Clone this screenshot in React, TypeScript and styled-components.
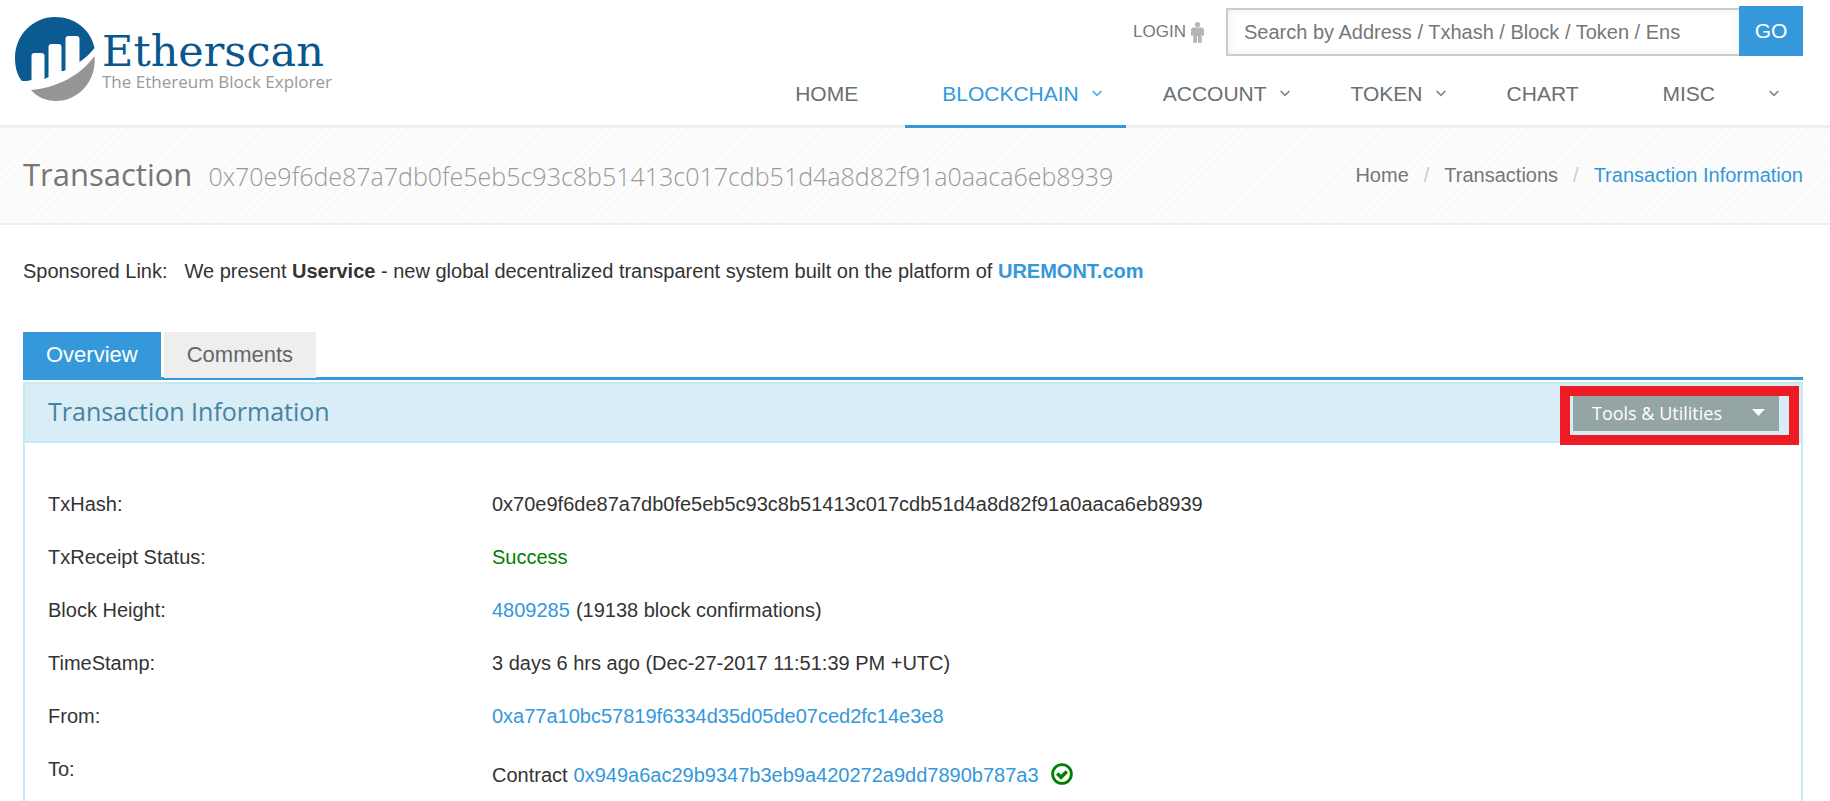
import React from "react";
import styled, { createGlobalStyle, css } from "styled-components";

const sans = `"Liberation Sans", Arial, sans-serif`;
const display = `"Open Sans", "Noto Sans", sans-serif`;

const GlobalStyle = createGlobalStyle`
  *, *::before, *::after { box-sizing: border-box; }
  body { margin: 0; background: #fff; color: #333; font: 20px/30px ${sans}; }
  a { color: #3498db; text-decoration: none; }
  h1, h2, p, dl, dd, dt, ul, ol { margin: 0; padding: 0; font-weight: 400; }
  ul, ol { list-style: none; }
`;

const Page = styled.div`
  display: flex;
  flex-direction: column;
  height: 100vh;
  overflow: hidden;
`;

const Header = styled.header`
  display: flex;
  flex: none;
  justify-content: space-between;
  height: 128px;
  padding: 0 27px 0 15px;
  border-bottom: 3px solid #eee;
`;

const Brand = styled.a`
  display: flex;
  gap: 7px;
  padding-top: 17px;
`;

const LogoMark = styled.svg`
  display: block;
  width: 80px;
  height: 84px;
`;

const BrandText = styled.span`
  display: flex;
  flex-direction: column;
  padding-top: 13px;
`;

const BrandName = styled.span`
  color: #08578f;
  font: 43px/42px "DejaVu Serif", serif;
`;

const Tagline = styled.span`
  color: #999;
  font: 17px/20px ${display};
`;

const HeaderRight = styled.div`
  display: flex;
  flex-direction: column;
  align-items: flex-end;
  justify-content: space-between;
`;

const TopRow = styled.div`
  display: flex;
  align-items: flex-start;
  gap: 22px;
  padding-top: 6px;
`;

const Login = styled.a`
  display: flex;
  align-items: center;
  gap: 5px;
  height: 52px;
  color: #777;
  font-size: 17px;
`;

const PersonIcon = styled.svg`
  width: 13px;
  height: 21px;
  fill: #b5b5b5;
`;

const Search = styled.form`
  display: flex;
  align-items: flex-end;
`;

const SearchInput = styled.input`
  width: 513px;
  height: 48px;
  padding: 0 16px;
  border: 2px solid #ccc;
  border-right: 0;
  border-radius: 0;
  background: #fff;
  box-shadow: inset 0 0 10px #eee;
  font: 20px/30px ${sans};
  &::placeholder { color: #777; opacity: 1; }
`;

const GoButton = styled.button`
  width: 64px;
  height: 50px;
  padding: 0;
  border: 0;
  background: #3498db;
  color: #fff;
  font: 21px/30px ${sans};
`;

const NavList = styled.ul`
  display: flex;
  margin-bottom: -3px;
`;

const NavLink = styled.a<{ $active?: boolean; $menu?: boolean; $wide?: boolean }>`
  display: flex;
  align-items: center;
  gap: ${(p) => (p.$wide ? 54 : 13)}px;
  height: 66px;
  padding: 0 ${(p) => (p.$menu ? 24 : 47)}px 0 37px;
  border-bottom: 3px solid ${(p) => (p.$active ? "#3498db" : "transparent")};
  color: ${(p) => (p.$active ? "#3498db" : "#687074")};
  font-size: 21px;
  line-height: 30px;
`;

const ChevronSvg = styled.svg`
  width: 10px;
  height: 7px;
  fill: none;
  stroke: currentColor;
  stroke-width: 1.6;
  opacity: 0.85;
`;

const TitleBand = styled.section`
  display: flex;
  flex: none;
  align-items: center;
  justify-content: space-between;
  height: 97px;
  padding: 0 27px 2px 23px;
  border-bottom: 2px solid #eee;
  background: repeating-linear-gradient(-45deg, #fdfdfd 0 3px, #fafafa 3px 6px);
`;

const PageTitle = styled.h1`
  color: #777;
  font: 31px/40px ${display};
`;

const TitleHash = styled.small`
  margin-left: 16px;
  color: #999;
  font-size: 25px;
  font-weight: 300;
`;

const Crumbs = styled.ol`
  display: flex;
`;

const Crumb = styled.li`
  & + &::before {
    content: "/";
    padding: 0 15px;
    color: #ccc;
  }
`;

const CrumbLink = styled.a<{ $current?: boolean }>`
  color: ${(p) => (p.$current ? "#3498db" : "#777")};
`;

const Sponsor = styled.p`
  flex: none;
  padding: 31px 23px 46px;
`;

const SponsorText = styled.span`
  margin-left: 17px;
`;

const Tabs = styled.div`
  display: flex;
  flex: none;
  align-items: flex-start;
  gap: 3px;
  height: 48px;
  margin: 0 27px 0 23px;
  border-bottom: 3px solid #3498db;
`;

const Tab = styled.button<{ $active?: boolean }>`
  height: 46px;
  padding: 0 23px;
  border: 0;
  background: #eee;
  color: #666;
  font: 22px/30px ${sans};
  ${(p) =>
    p.$active &&
    css`
      background: #3498db;
      color: #fff;
    `}
`;

const Panel = styled.section`
  flex: 1;
  margin: 2px 27px 0 23px;
  border: 2px solid #c5eaf2;
  border-bottom: 0;
`;

const PanelHeader = styled.div`
  display: flex;
  align-items: center;
  justify-content: space-between;
  height: 59px;
  padding: 0 22px 0 23px;
  border-bottom: 2px solid #c5eaf2;
  background: #d9edf7;
`;

const PanelTitle = styled.h2`
  padding-bottom: 3px;
  color: #4583a3;
  font: 25px/34px ${display};
`;

const ToolsWrap = styled.div`
  position: relative;
`;

const ToolsButton = styled.button`
  display: flex;
  align-items: center;
  justify-content: space-between;
  width: 206px;
  height: 36px;
  padding: 0 14px 0 19px;
  border: 0;
  background: #95a5a6;
  color: #fff;
  font: 500 18px/26px ${display};
`;

const Caret = styled.svg`
  width: 13px;
  height: 7px;
  fill: currentColor;
`;

const Highlight = styled.div`
  position: absolute;
  inset: -9px -20px -14px -13px;
  border: 10px solid #ed1c24;
  pointer-events: none;
`;

const Details = styled.dl`
  padding-top: 35px;
`;

const Row = styled.div`
  display: grid;
  grid-template-columns: 1fr 3fr;
  min-height: 53px;
`;

const Term = styled.dt`
  padding: 11px 0 12px 23px;
`;

const Value = styled.dd<{ $tall?: boolean }>`
  display: flex;
  align-items: center;
  gap: 6px;
  padding: ${(p) => (p.$tall ? 17 : 11)}px 23px 12px;
`;

const Success = styled.span`
  color: #008000;
`;

const CheckIcon = styled.svg`
  width: 22px;
  height: 22px;
  margin: 0 0 2px 6px;
`;

const Chevron = () => (
  <ChevronSvg viewBox="0 0 10 7" aria-hidden="true">
    <path d="M.6 1 5 5.400 9.400 1" />
  </ChevronSvg>
);

const navItems = [
  { label: "HOME" },
  { label: "BLOCKCHAIN", menu: true, active: true },
  { label: "ACCOUNT", menu: true },
  { label: "TOKEN", menu: true },
  { label: "CHART" },
  { label: "MISC", menu: true, wide: true },
];

const hash = "0x70e9f6de87a7db0fe5eb5c93c8b51413c017cdb51d4a8d82f91a0aaca6eb8939";

const rows: { label: string; value: React.ReactNode; tall?: boolean }[] = [
  { label: "TxHash:", value: hash },
  { label: "TxReceipt Status:", value: <Success>Success</Success> },
  {
    label: "Block Height:",
    value: (
      <>
        <a href="#block">4809285</a> (19138 block confirmations)
      </>
    ),
  },
  { label: "TimeStamp:", value: "3 days 6 hrs ago (Dec-27-2017 11:51:39 PM +UTC)" },
  { label: "From:", value: <a href="#from">0xa77a10bc57819f6334d35d05de07ced2fc14e3e8</a> },
  {
    label: "To:",
    tall: true,
    value: (
      <>
        Contract <a href="#to">0x949a6ac29b9347b3eb9a420272a9dd7890b787a3</a>
        <CheckIcon viewBox="0 0 22 22" role="img" aria-label="Verified">
          <circle cx="11" cy="11" r="9.4" fill="none" stroke="#008000" strokeWidth="2.8" />
          <path d="M6.2 10.400 10 14.200 15.800 8.400" fill="none" stroke="#008000" strokeWidth="3.600" />
        </CheckIcon>
      </>
    ),
  },
];

export default function App() {
  return (
    <Page>
      <GlobalStyle />
      <Header>
        <Brand href="#top">
          <LogoMark viewBox="0 0 80 84" aria-hidden="true">
            <path
              fill="#0b5a91"
              d="M7 64C2 58 0 50 0 41 0 18 18 0 40 0c20 0 36 13 39.500 31-4 5-9 10-15 14V22c0-2-1-3-3-3h-8c-2 0-3 1-3 3v31c-1 1-3 1-4 1V30c0-2-1-3-3-3h-7c-2 0-3 1-3 3v30l-4 2V39c0-2-1-3-3-3h-7c-2 0-3 1-3 3v24c-3 1-6 1-9.500 1z"
            />
            <path fill="#969593" d="M16 73c26-2 50-15 63.500-34C82 63 64 84 41 84c-10 0-19-4-25-11z" />
          </LogoMark>
          <BrandText>
            <BrandName>Etherscan</BrandName>
            <Tagline>The Ethereum Block Explorer</Tagline>
          </BrandText>
        </Brand>
        <HeaderRight>
          <TopRow>
            <Login href="#login">
              LOGIN
              <PersonIcon viewBox="0 0 13 21" aria-hidden="true">
                <circle cx="6.500" cy="2.600" r="2.600" />
                <path d="M2.500 5.600h8c1.500 0 2.500 1 2.500 2.400V12.500c0 1.700-2.300 1.700-2.300 0V20c0 1.300-3.700 1.300-3.700 0v-6h-1v6c0 1.300-3.700 1.300-3.700 0v-7.500c0 1.700-2.300 1.700-2.300 0V8c0-1.400 1-2.400 2.500-2.400z" />
              </PersonIcon>
            </Login>
            <Search onSubmit={(e) => e.preventDefault()}>
              <SearchInput
                type="text"
                aria-label="Search"
                placeholder="Search by Address / Txhash / Block / Token / Ens"
              />
              <GoButton type="submit">GO</GoButton>
            </Search>
          </TopRow>
          <nav>
            <NavList>
              {navItems.map((n) => (
                <li key={n.label}>
                  <NavLink href={`#${n.label.toLowerCase()}`} $active={n.active} $menu={n.menu} $wide={n.wide}>
                    {n.label}
                    {n.menu && <Chevron />}
                  </NavLink>
                </li>
              ))}
            </NavList>
          </nav>
        </HeaderRight>
      </Header>

      <TitleBand>
        <PageTitle>
          Transaction
          <TitleHash>{hash}</TitleHash>
        </PageTitle>
        <Crumbs>
          <Crumb><CrumbLink href="#home">Home</CrumbLink></Crumb>
          <Crumb><CrumbLink href="#transactions">Transactions</CrumbLink></Crumb>
          <Crumb><CrumbLink href="#info" $current>Transaction Information</CrumbLink></Crumb>
        </Crumbs>
      </TitleBand>

      <Sponsor>
        Sponsored Link:
        <SponsorText>
          We present <b>Uservice</b> - new global decentralized transparent system built on the platform of{" "}
          <a href="#uremont"><b>UREMONT.com</b></a>
        </SponsorText>
      </Sponsor>

      <Tabs role="tablist">
        <Tab type="button" role="tab" aria-selected="true" $active>Overview</Tab>
        <Tab type="button" role="tab" aria-selected="false">Comments</Tab>
      </Tabs>

      <Panel>
        <PanelHeader>
          <PanelTitle>Transaction Information</PanelTitle>
          <ToolsWrap>
            <ToolsButton type="button">
              Tools &amp; Utilities
              <Caret viewBox="0 0 13 7" aria-hidden="true"><path d="M0 0h13L6.500 7z" /></Caret>
            </ToolsButton>
            <Highlight />
          </ToolsWrap>
        </PanelHeader>
        <Details>
          {rows.map((r) => (
            <Row key={r.label}>
              <Term>{r.label}</Term>
              <Value $tall={r.tall}>{r.value}</Value>
            </Row>
          ))}
        </Details>
      </Panel>
    </Page>
  );
}
